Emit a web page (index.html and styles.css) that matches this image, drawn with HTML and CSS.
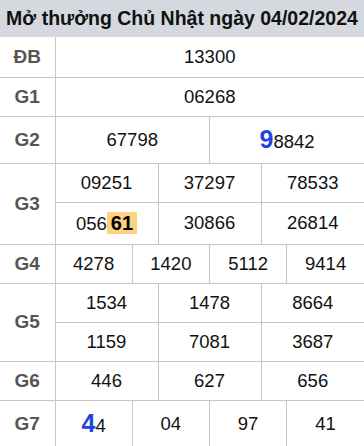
FILE: index.html
```html
<!DOCTYPE html>
<html lang="vi">
<head>
    <meta charset="UTF-8">
    <meta name="viewport" content="width=device-width, initial-scale=1.0">
    <title>Kết quả xổ số</title>
    <link rel="stylesheet" href="styles.css">
</head>
<body>
    <div class="result">
        <h2 class="result-title">Mở thưởng Chủ Nhật ngày 04/02/2024</h2>
        <table class="kq">
            <colgroup>
                <col class="col-label">
                <col span="12">
            </colgroup>
            <tr class="row-db">
                <td class="label">ĐB</td>
                <td colspan="12">13300</td>
            </tr>
            <tr>
                <td class="label">G1</td>
                <td colspan="12">06268</td>
            </tr>
            <tr class="row-big">
                <td class="label">G2</td>
                <td colspan="6">67798</td>
                <td colspan="6"><span class="hot">9</span>8842</td>
            </tr>
            <tr>
                <td class="label" rowspan="2">G3</td>
                <td colspan="4">09251</td>
                <td colspan="4">37297</td>
                <td colspan="4">78533</td>
            </tr>
            <tr class="row-mark">
                <td colspan="4">056<span class="mark">61</span></td>
                <td colspan="4">30866</td>
                <td colspan="4">26814</td>
            </tr>
            <tr>
                <td class="label">G4</td>
                <td colspan="3">4278</td>
                <td colspan="3">1420</td>
                <td colspan="3">5112</td>
                <td colspan="3">9414</td>
            </tr>
            <tr>
                <td class="label" rowspan="2">G5</td>
                <td colspan="4">1534</td>
                <td colspan="4">1478</td>
                <td colspan="4">8664</td>
            </tr>
            <tr>
                <td colspan="4">1159</td>
                <td colspan="4">7081</td>
                <td colspan="4">3687</td>
            </tr>
            <tr>
                <td class="label">G6</td>
                <td colspan="4">446</td>
                <td colspan="4">627</td>
                <td colspan="4">656</td>
            </tr>
            <tr class="row-big">
                <td class="label">G7</td>
                <td colspan="3"><span class="hot">4</span>4</td>
                <td colspan="3">04</td>
                <td colspan="3">97</td>
                <td colspan="3">41</td>
            </tr>
        </table>
    </div>
</body>
</html>
```

FILE: styles.css
```css
* {
    margin: 0;
    padding: 0;
    box-sizing: border-box;
}

body {
    background-color: #fff;
    font-family: "Liberation Sans", Arial, sans-serif;
    color: #111;
}

.result {
    width: 364px;
    overflow: hidden;
}

.result-title {
    height: 37px;
    background-color: #d5d9df;
    font-size: 19.5px;
    font-weight: 700;
    line-height: 36px;
    text-align: center;
    white-space: nowrap;
    color: #111;
}

.kq {
    width: 100%;
    border-collapse: collapse;
    border-style: hidden;
    table-layout: fixed;
}

.kq .col-label {
    width: 55px;
}

.kq td {
    height: 39px;
    border: 1px solid #c6c6c6;
    font-size: 18.5px;
    text-align: center;
    vertical-align: middle;
}

.kq .row-db td {
    height: 40px;
}

.kq .row-big td {
    height: 47px;
}

.kq .row-mark td {
    height: 42px;
}

.kq td.label {
    font-size: 19px;
    font-weight: 700;
    color: #555;
}

.kq .hot {
    font-size: 25px;
    font-weight: 700;
    color: #1d44e0;
}

.kq .mark {
    display: inline-block;
    padding: 0 4px;
    background-color: #fcd180;
    font-size: 20px;
    font-weight: 700;
    line-height: 22px;
    color: #000;
}
```
